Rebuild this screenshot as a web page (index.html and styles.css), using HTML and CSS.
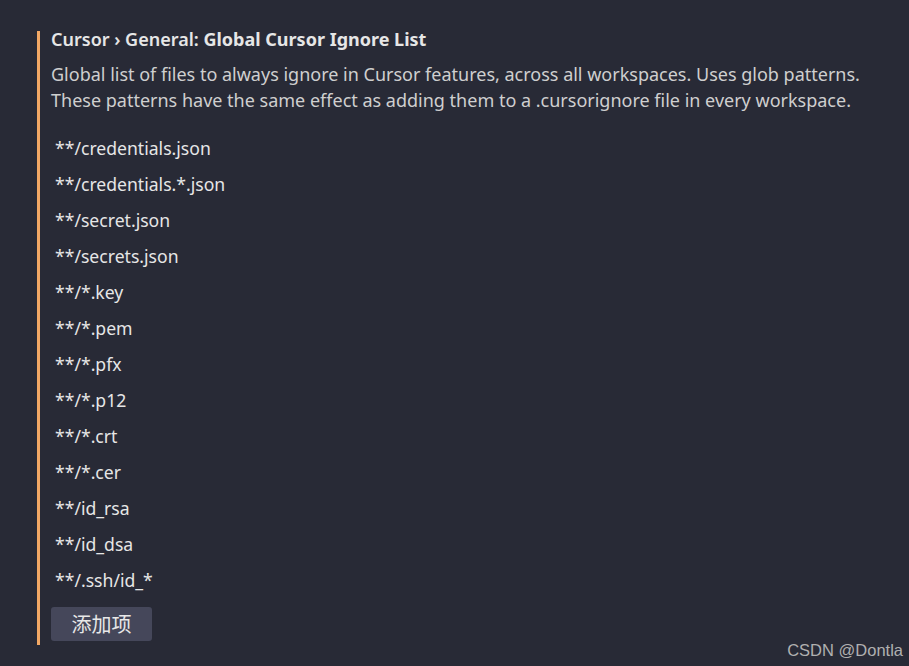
FILE: index.html
```html
<!DOCTYPE html>
<html lang="en">
<head>
    <meta charset="UTF-8" />
    <title>Settings - Global Cursor Ignore List</title>
    <link rel="stylesheet" href="styles.css">
</head>
<body>
    <div class="setting">
        <div class="setting-title">Cursor › General: <strong>Global Cursor Ignore List</strong></div>
        <div class="setting-desc">
            Global list of files to always ignore in Cursor features, across all workspaces. Uses glob patterns.<br />
            These patterns have the same effect as adding them to a .cursorignore file in every workspace.
        </div>
        <ul class="pattern-list">
            <li>**/credentials.json</li>
            <li>**/credentials.*.json</li>
            <li>**/secret.json</li>
            <li>**/secrets.json</li>
            <li>**/*.key</li>
            <li>**/*.pem</li>
            <li>**/*.pfx</li>
            <li>**/*.p12</li>
            <li>**/*.crt</li>
            <li>**/*.cer</li>
            <li>**/id_rsa</li>
            <li>**/id_dsa</li>
            <li>**/.ssh/id_*</li>
        </ul>
        <button class="add-btn">添加项</button>
    </div>
    <div class="watermark">CSDN @Dontla</div>
</body>
</html>
```

FILE: styles.css
```css
html, body {
    margin: 0;
    height: 100%;
}
body {
    background-color: #282a36;
    color: #e2e2e2;
    font-family: "Noto Sans", "Noto Sans CJK SC", sans-serif;
    overflow: hidden;
    position: relative;
}
.setting {
    margin: 31px 0 0 37px;
    border-left: 3px solid #f2a865;
    padding-left: 11px;
    padding-bottom: 4px;
}
.setting-title {
    font-size: 18px;
    font-weight: 600;
    line-height: 16px;
    color: #e6e6e6;
}
.setting-title strong {
    font-weight: 700;
}
.setting-desc {
    margin-top: 14px;
    font-size: 18px;
    line-height: 26px;
    color: #cfcfcf;
}
.pattern-list {
    list-style: none;
    margin: 17px 0 0;
    padding: 0 0 0 4px;
}
.pattern-list li {
    font-size: 17.6px;
    line-height: 36px;
    color: #e6e6e6;
}
.add-btn {
    display: block;
    margin-top: 9px;
    width: 101px;
    height: 34px;
    border: none;
    border-radius: 3px;
    background-color: #45475a;
    color: #e8e8e8;
    font-family: "Noto Sans CJK SC", sans-serif;
    font-size: 20px;
    line-height: 34px;
    padding: 0;
}
.watermark {
    position: absolute;
    right: 6px;
    bottom: 6px;
    font-family: "Liberation Sans", sans-serif;
    font-size: 16.5px;
    color: #b0b0b0;
}
```
